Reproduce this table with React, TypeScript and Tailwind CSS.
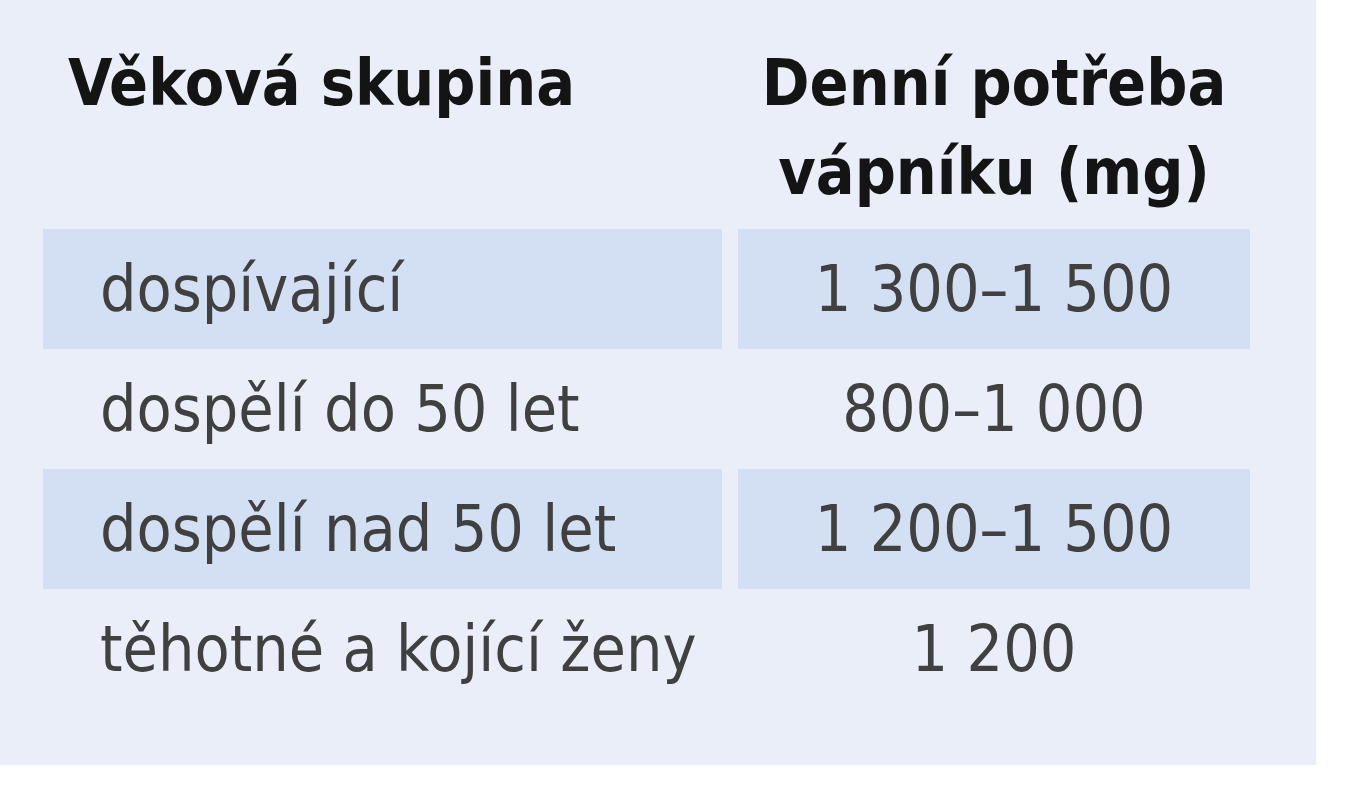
const rows = [
  { group: "dospívající", need: "1 300–1 500", shaded: true },
  { group: "dospělí do 50 let", need: "800–1 000", shaded: false },
  { group: "dospělí nad 50 let", need: "1 200–1 500", shaded: true },
  { group: "těhotné a kojící ženy", need: "1 200", shaded: false },
];

export default function App() {
  return (
    <div className="min-h-screen w-full bg-white">
      <div
        className="w-[1316px] h-[765px] bg-[#e9eef9] pl-[43px] pt-[39px]"
        style={{ fontFamily: '"Liberation Sans Narrow", "DejaVu Sans Condensed", "Liberation Sans", sans-serif' }}
      >
        <div className="grid grid-cols-[679px_512px] gap-x-[16px]">
          <div className="h-[190px] pl-[25px] text-[64px] leading-[89px] font-bold text-[#141414]">
            Věková skupina
          </div>
          <div className="h-[190px] text-center text-[64px] leading-[89px] font-bold text-[#141414]">
            Denní potřeba
            <br />
            vápníku (mg)
          </div>
          {rows.map((r) => [
            <div
              key={r.group + "a"}
              className={`h-[120px] flex items-center pl-[57px] text-[64px] text-[#404040] ${r.shaded ? "bg-[#d3e0f3]" : ""}`}
            >
              {r.group}
            </div>,
            <div
              key={r.group + "b"}
              className={`h-[120px] flex items-center justify-center text-[64px] text-[#404040] ${r.shaded ? "bg-[#d3e0f3]" : ""}`}
            >
              {r.need}
            </div>,
          ])}
        </div>
      </div>
    </div>
  );
}
